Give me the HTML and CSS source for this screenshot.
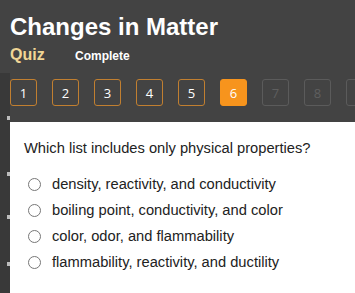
FILE: index.html
```html
<!DOCTYPE html>
<html>
<head>
<meta charset="utf-8">
<link rel="stylesheet" href="styles.css">
</head>
<body>
<div class="page">
  <header class="head">
    <h1 class="title">Changes in Matter</h1>
    <div class="sub">
      <span class="quiz">Quiz</span>
      <span class="status">Complete</span>
    </div>
  </header>
  <div class="body">
    <div class="rail">
      <span class="mark m1"></span>
      <span class="mark m2"></span>
      <span class="mark m3"></span>
      <span class="mark m4"></span>
    </div>
    <div class="main">
      <nav class="nums">
        <span class="num">1</span>
        <span class="num">2</span>
        <span class="num">3</span>
        <span class="num">4</span>
        <span class="num">5</span>
        <span class="num active">6</span>
        <span class="num off">7</span>
        <span class="num off">8</span>
        <span class="num off"></span>
      </nav>
      <section class="card">
        <p class="q">Which list includes only physical properties?</p>
        <ul class="opts">
          <li><span class="radio"></span>density, reactivity, and conductivity</li>
          <li><span class="radio"></span>boiling point, conductivity, and color</li>
          <li><span class="radio"></span>color, odor, and flammability</li>
          <li><span class="radio"></span>flammability, reactivity, and ductility</li>
        </ul>
      </section>
    </div>
  </div>
</div>
</body>
</html>
```
FILE: styles.css
```css
html, body { margin: 0; padding: 0; }
body {
  background: #434343;
  font-family: "Liberation Sans", Arial, sans-serif;
  width: 355px;
  height: 293px;
  overflow: hidden;
}
.page { display: flex; flex-direction: column; height: 293px; }
.head { padding: 13px 0 0 10px; height: 61px; box-sizing: border-box; }
.title {
  margin: 0;
  font-size: 24px;
  line-height: 28px;
  font-weight: bold;
  color: #ffffff;
}
.sub { display: flex; align-items: baseline; margin-top: 5px; }
.quiz { color: #f0d595; font-weight: bold; font-size: 16px; width: 65px; }
.status { color: #ffffff; font-weight: bold; font-size: 12px; }
.body { display: flex; flex: 1; }
.rail {
  width: 10px;
  background: #393939;
  margin-top: 12px;
  position: relative;
}
.mark { position: absolute; right: 0; width: 3px; height: 4px; background: #bdbdbd; }
.m1 { top: 43px; }
.m2 { top: 99px; }
.m3 { top: 142px; }
.m4 { top: 189px; }
.main { flex: 1; display: flex; flex-direction: column; overflow: hidden; }
.nums { display: flex; gap: 15px; padding: 18px 0 14px 0; height: 61px; box-sizing: border-box; }
.num {
  flex: 0 0 auto;
  width: 27px;
  height: 27px;
  box-sizing: border-box;
  border: 1px solid #c17f30;
  border-radius: 3px;
  color: #ffffff;
  font-family: "Open Sans", sans-serif;
  font-size: 13px;
  display: flex;
  align-items: center;
  justify-content: center;
}
.num.active { background: #f7941d; border-color: #f7941d; }
.num.off { border-color: #5b5b5b; color: #5f5f5f; }
.card { background: #ffffff; flex: 1; padding: 17px 0 0 14px; }
.q { margin: 0 0 13px 0; font-size: 14.7px; line-height: 19px; color: #222222; }
.opts { list-style: none; margin: 0; padding: 0; }
.opts li {
  display: flex;
  align-items: center;
  height: 26px;
  font-size: 14.7px;
  color: #222222;
}
.radio {
  width: 13px;
  height: 13px;
  box-sizing: border-box;
  border: 1px solid #777777;
  border-radius: 50%;
  margin: 0 11px 0 4px;
}
```
